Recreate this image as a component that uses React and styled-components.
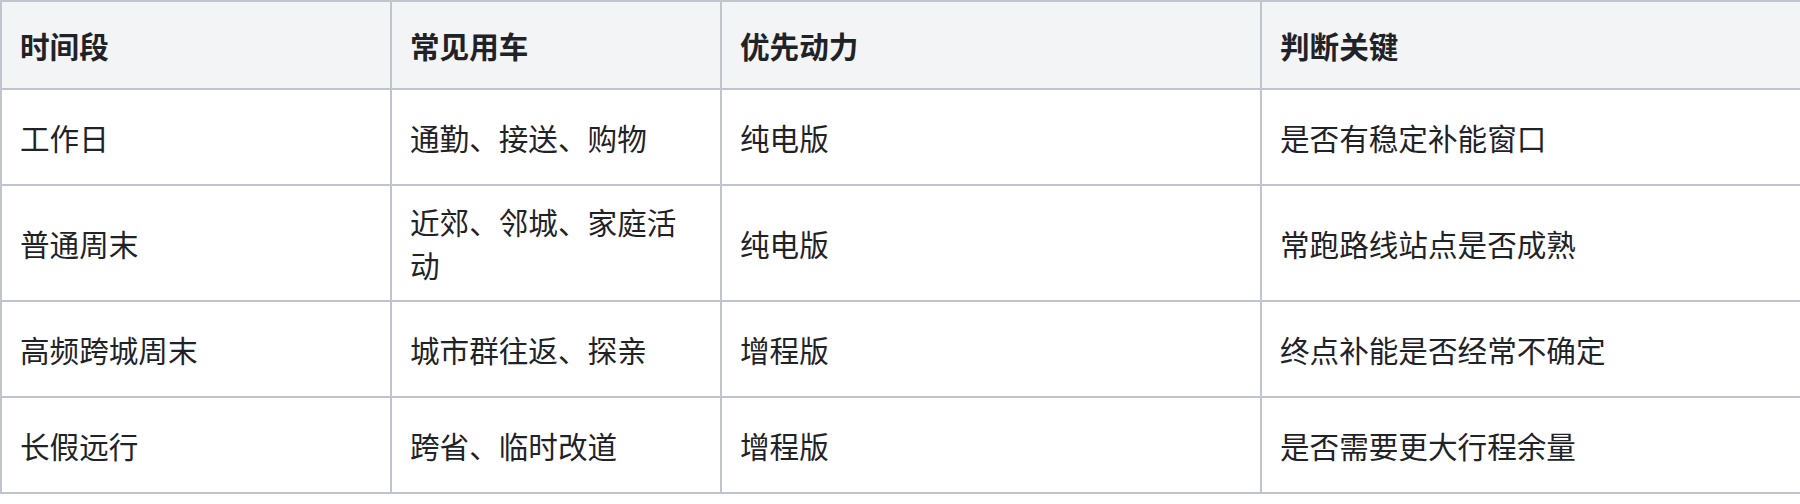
import React from "react";
import styled, { createGlobalStyle } from "styled-components";

const GlobalStyle = createGlobalStyle`
  html, body {
    margin: 0;
    padding: 0;
    background: #ffffff;
  }
  body {
    font-family: "Noto Sans CJK SC", "Noto Sans", "Liberation Sans", sans-serif;
    color: #1f2328;
  }
`;

const Table = styled.table`
  width: 1800px;
  border-collapse: collapse;
  table-layout: fixed;
  font-size: 29.6px;
  line-height: 43px;
  color: #1f2328;
`;

const Col = styled.col`
  width: ${(p) => p.$w}px;
`;

const HeadCell = styled.th`
  background: #f3f4f6;
  border: 2px solid #c0c5cd;
  padding: 0 18px;
  height: 86px;
  text-align: left;
  font-weight: 700;
  vertical-align: middle;
`;

const Row = styled.tr`
  height: 96px;
`;

const Cell = styled.td`
  border: 2px solid #c0c5cd;
  padding: 14px 18px;
  vertical-align: middle;
  font-weight: 400;
`;

const columns = [
  { title: "时间段", width: 390 },
  { title: "常见用车", width: 330 },
  { title: "优先动力", width: 540 },
  { title: "判断关键", width: 540 },
];

const rows = [
  ["工作日", "通勤、接送、购物", "纯电版", "是否有稳定补能窗口"],
  ["普通周末", "近郊、邻城、家庭活动", "纯电版", "常跑路线站点是否成熟"],
  ["高频跨城周末", "城市群往返、探亲", "增程版", "终点补能是否经常不确定"],
  ["长假远行", "跨省、临时改道", "增程版", "是否需要更大行程余量"],
];

const App = () => {
  return (
    <>
      <GlobalStyle />
      <Table>
        <colgroup>
          {columns.map((c) => (
            <Col key={c.title} $w={c.width} />
          ))}
        </colgroup>
        <thead>
          <tr>
            {columns.map((c) => (
              <HeadCell key={c.title}>{c.title}</HeadCell>
            ))}
          </tr>
        </thead>
        <tbody>
          {rows.map((r) => (
            <Row key={r[0]}>
              {r.map((v, j) => (
                <Cell key={j}>{v}</Cell>
              ))}
            </Row>
          ))}
        </tbody>
      </Table>
    </>
  );
};

export default App;
